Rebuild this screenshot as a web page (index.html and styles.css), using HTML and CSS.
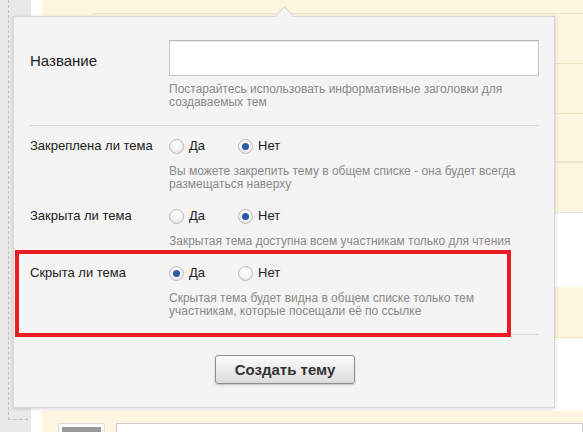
FILE: index.html
```html
<!DOCTYPE html>
<html lang="ru">
<head>
<meta charset="utf-8">
<title>Создать тему</title>
<link rel="stylesheet" href="styles.css">
</head>
<body>
<div class="page">
  <div class="side"><div class="dash"></div></div>
  <div class="gutter"></div>
  <div class="feed">
    <div class="row first"><div class="line"></div></div>
    <div class="row y h49"></div>
    <div class="row y h49"></div>
    <div class="row y h48 dark"></div>
    <div class="row y h49 grayline"></div>
    <div class="row w h74"></div>
    <div class="row y h50"></div>
    <div class="row w h73"></div>
    <div class="row compose">
      <div class="avatar"><div class="pic"></div></div>
      <div class="reply"></div>
    </div>
  </div>

  <div class="popup">
    <div class="arrow"></div>
    <div class="sec title">
      <div class="lbl big">Название</div>
      <div class="field">
        <div class="input"></div>
        <div class="hint">Постарайтесь использовать информативные заголовки для<br>создаваемых тем</div>
      </div>
    </div>
    <div class="opts">
      <div class="sec opt">
        <div class="lbl">Закреплена ли тема</div>
        <div class="field">
          <div class="radios">
            <span class="radio"><span class="circle"></span>Да</span>
            <span class="radio on"><span class="circle"></span>Нет</span>
          </div>
          <div class="hint">Вы можете закрепить тему в общем списке - она будет всегда<br>размещаться наверху</div>
        </div>
      </div>
      <div class="sec opt">
        <div class="lbl">Закрыта ли тема</div>
        <div class="field">
          <div class="radios">
            <span class="radio"><span class="circle"></span>Да</span>
            <span class="radio on"><span class="circle"></span>Нет</span>
          </div>
          <div class="hint">Закрытая тема доступна всем участникам только для чтения</div>
        </div>
      </div>
      <div class="sec opt">
        <div class="lbl">Скрыта ли тема</div>
        <div class="field">
          <div class="radios">
            <span class="radio on"><span class="circle"></span>Да</span>
            <span class="radio"><span class="circle"></span>Нет</span>
          </div>
          <div class="hint">Скрытая тема будет видна в общем списке только тем<br>участникам, которые посещали её по ссылке</div>
        </div>
      </div>
    </div>
    <div class="actions"><button class="btn" type="button">Создать тему</button></div>
    <div class="mark"></div>
  </div>
</div>
</body>
</html>
```

FILE: styles.css
```css
html, body {
  margin: 0;
  padding: 0;
}
body {
  width: 583px;
  height: 432px;
  overflow: hidden;
  background: #fff;
  font-family: "Liberation Sans", Arial, sans-serif;
}
.page {
  position: relative;
  display: flex;
  width: 583px;
  height: 432px;
  overflow: hidden;
}
.side {
  width: 31px;
  flex: none;
  background: #e9e9e9;
  padding-left: 8px;
  box-sizing: border-box;
}
.dash {
  width: 20px;
  height: 420px;
  border-left: 1px dashed #bdbdbd;
  border-bottom: 1px dashed #bdbdbd;
  box-sizing: border-box;
}
.gutter {
  width: 11px;
  flex: none;
  background: #fff;
}
.feed {
  flex: 1;
  display: flex;
  flex-direction: column;
}
.row {
  flex: none;
  box-sizing: content-box;
}
.row.first {
  background: #fdf5e0;
  padding-left: 50px;
}
.row.first .line {
  height: 13px;
  border-bottom: 1px solid #efe3c3;
}
.row.y {
  background: #fdf5e0;
  border-bottom: 1px solid #efe3c3;
}
.row.dark {
  border-bottom: 2px solid #efe5cc;
}
.row.grayline {
  border-bottom: 1px solid #e3e3e3;
}
.row.w {
  background: #fff;
}
.h48 { height: 47px; }
.h49 { height: 49px; }
.h50 { height: 50px; }
.h73 { height: 73px; }
.h74 { height: 74px; }
.row.compose {
  flex: 1;
  background: #fdf5e0;
  display: flex;
  align-items: flex-start;
  padding: 12px 0 0 16px;
}
.avatar {
  width: 47px;
  height: 40px;
  box-sizing: border-box;
  background: #fff;
  border: 1px solid #dedede;
  border-radius: 2px;
  padding: 3px;
}
.pic {
  height: 100%;
  background: #9a9a9a;
}
.reply {
  flex: 1;
  height: 40px;
  margin-left: 11px;
  background: #fff;
  border: 1px solid #cfcfcf;
}

.popup {
  position: absolute;
  left: 13px;
  top: 16px;
  width: 542px;
  box-sizing: border-box;
  background: #f4f4f4;
  border: 1px solid #d8d8d8;
  box-shadow: 0 1px 4px rgba(0, 0, 0, 0.16);
  padding: 0 15px 0 16px;
  color: #222;
}
.arrow {
  position: absolute;
  left: 264px;
  top: -8px;
  width: 12px;
  height: 12px;
  background: #f4f4f4;
  border-top: 1px solid #d8d8d8;
  border-left: 1px solid #d8d8d8;
  transform: rotate(45deg);
}
.sec {
  display: grid;
  grid-template-columns: 139px 1fr;
}
.sec.title {
  padding: 23px 0 16px;
  border-bottom: 1px solid #d9d9d9;
}
.lbl {
  font-size: 13px;
  line-height: 20px;
}
.lbl.big {
  font-size: 15px;
  line-height: 18px;
  padding-top: 12px;
}
.input {
  height: 36px;
  box-sizing: border-box;
  background: #fff;
  border: 1px solid #c8c8c8;
  border-top-color: #b5b5b5;
  box-shadow: inset 0 1px 2px rgba(0, 0, 0, 0.07);
}
.hint {
  margin-top: 7px;
  font-size: 12px;
  line-height: 13px;
  color: #8a8a8a;
}
.opts {
  padding: 10px 0 16px;
  border-bottom: 1px solid #d9d9d9;
}
.opt + .opt {
  margin-top: 15px;
}
.opt .hint {
  margin-top: 9px;
}
.radios {
  display: flex;
  height: 20px;
  align-items: center;
}
.radio {
  display: inline-flex;
  align-items: center;
  font-size: 13px;
  line-height: 20px;
  color: #222;
  width: 69px;
}
.circle {
  width: 15px;
  height: 15px;
  box-sizing: border-box;
  border: 1px solid #bcbcbc;
  border-radius: 50%;
  background: radial-gradient(circle at 50% 35%, #ffffff 0%, #f6f6f6 45%, #dedede 100%);
  margin-right: 5px;
  position: relative;
  flex: none;
}
.radio.on .circle::after {
  content: "";
  position: absolute;
  left: 3px;
  top: 3px;
  width: 7px;
  height: 7px;
  border-radius: 50%;
  background: #2c5aa6;
}
.actions {
  display: flex;
  justify-content: center;
  padding: 20px 0 23px;
}
.btn {
  width: 140px;
  height: 29px;
  box-sizing: border-box;
  border: 1px solid #8e8e8e;
  border-radius: 3px;
  background: linear-gradient(#fbfbfb, #dcdcdc);
  box-shadow: 0 1px 2px rgba(0, 0, 0, 0.22);
  font-family: "Liberation Sans", Arial, sans-serif;
  font-weight: bold;
  font-size: 15px;
  color: #333;
  padding: 0;
  margin-left: 1px;
}
.mark {
  position: absolute;
  left: 1px;
  top: 233px;
  width: 496px;
  height: 87px;
  box-sizing: border-box;
  border: 4px solid #ec1c24;
}
```
